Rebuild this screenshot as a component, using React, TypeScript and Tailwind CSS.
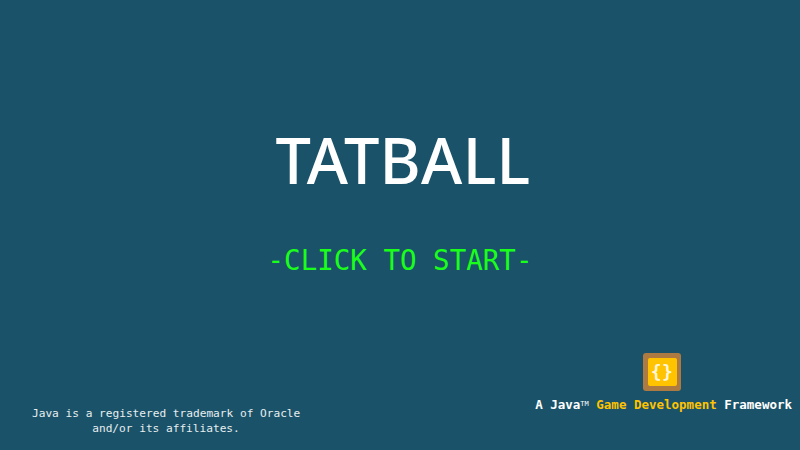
function LogoMark() {
  return (
    <div className="mr-[3px] flex h-[38px] w-[38px] items-center justify-center rounded-[3px] bg-[#ad7b42]">
      <div className="flex h-[28px] w-[29px] items-center justify-center rounded-[2px] bg-[#ffc300] font-['DejaVu_Sans_Mono',monospace] text-[18px] leading-none font-bold tracking-[0.5px] text-[#fff6d8]">
        {'{}'}
      </div>
    </div>
  );
}

export default function App() {
  return (
    <div className="flex h-[450px] w-[800px] flex-col overflow-hidden bg-[#1a5369] font-['DejaVu_Sans_Mono',monospace] text-white">
      <div className="flex flex-col items-center pt-[122px]">
        <h1 className="ml-[6px] font-['Noto_Sans',sans-serif] text-[63px] leading-[76px] font-medium tracking-[0.3px]">TATBALL</h1>
        <p className="mt-[45px] text-[27.5px] leading-[34px] text-[#1aff1a]">-CLICK TO START-</p>
      </div>
      <div className="mt-auto flex items-end justify-between pr-[8px] pb-[14px] pl-[32px]">
        <p className="w-[268px] text-center text-[11.15px] leading-[15px] whitespace-nowrap text-[#e8eef0]">
          Java is a registered trademark of Oracle
          <br />
          and/or its affiliates.
        </p>
        <div className="mb-[23px] flex flex-col items-center">
          <LogoMark />
          <p className="mt-[6px] text-[12.5px] leading-[16px] font-bold">
            A Java<sup className="text-[7px] font-normal">TM</sup> <span className="text-[#ffc300]">Game Development</span> Framework
          </p>
        </div>
      </div>
    </div>
  );
}
